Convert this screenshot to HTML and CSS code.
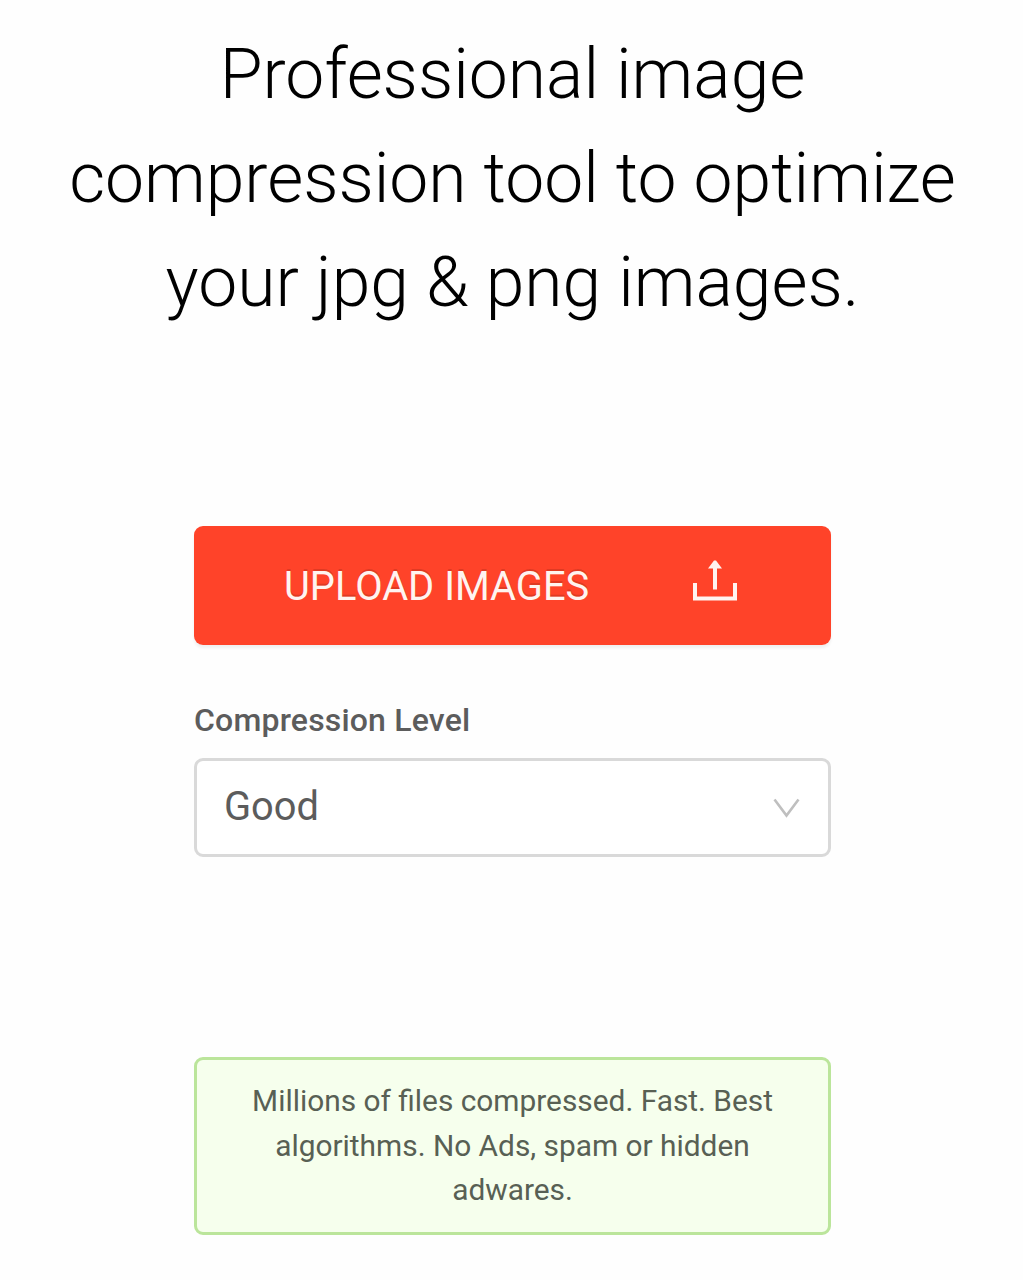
FILE: index.html
```html
<!DOCTYPE html>
<html lang="en">
<head>
<meta charset="utf-8">
<title>Image compression</title>
<link rel="stylesheet" href="styles.css">
</head>
<body>
<main class="page">
  <h1 class="headline"><span class="line">Professional image</span><span class="line">compression tool to optimize</span><span class="line">your jpg &amp; png images.</span></h1>
  <section class="panel">
    <button class="upload" type="button">
      <span class="upload-text">UPLOAD IMAGES</span>
      <svg class="upload-icon" viewBox="0 0 46 44" width="46" height="44" fill="none"><path d="M3 24V39.500H43V24" stroke="#fff4f0" stroke-width="4"/><path d="M23 30.500V8" stroke="#fff4f0" stroke-width="4"/><path d="M16 9.500L22 1.500H24L30 9.500Z" fill="#fff4f0"/></svg>
    </button>
    <div class="label">Compression Level</div>
    <div class="select">
      <span class="value">Good</span>
      <svg class="chevron" viewBox="0 0 28 22" width="28" height="22" fill="none"><path d="M2.500 2.500L14.500 18.500L26.500 2.500" stroke="#bfbfbf" stroke-width="2.600"/></svg>
    </div>
    <p class="notice"><span class="line">Millions of files compressed. Fast. Best</span><span class="line">algorithms. No Ads, spam or hidden</span><span class="line">adwares.</span></p>
  </section>
</main>
</body>
</html>
```
FILE: styles.css
```css
* { box-sizing: border-box; }
body { margin: 0; background: #fefefe; font-family: Roboto, sans-serif; }
.page { display: flex; flex-direction: column; align-items: center; width: 1023px; height: 1280px; padding-top: 22px; overflow: hidden; }
.headline { margin: 0 0 0 2px; font-size: 69.600px; font-weight: 300; line-height: 104px; color: #000; text-align: center; }
.line { display: block; white-space: nowrap; }
.panel { width: 637px; margin: 192px 0 0 2px; }
.upload { display: flex; align-items: flex-start; width: 100%; height: 119px; padding: 0 0 0 90px; border: 0; border-radius: 9px; background: #ff4329; color: #fff4f0; font: 400 39.850px/119px Roboto, sans-serif; box-shadow: 0 3px 3px rgba(0,0,0,.06); text-shadow: 0 -2px 0 rgba(0,0,0,.12); }
.upload-text { width: 408px; padding-top: 1px; text-align: left; white-space: nowrap; }
.upload-icon { margin-top: 33px; }
.label { margin-top: 56px; font-size: 32px; font-weight: 500; line-height: 38px; letter-spacing: .180px; color: #5c5c5c; white-space: nowrap; }
.select { display: flex; align-items: center; justify-content: space-between; height: 99px; margin-top: 19px; padding: 0 28px 0 27px; border: 3px solid #d9d9d9; border-radius: 9px; color: #5c5c5c; font-size: 39.800px; background: #fff; }
.value { padding-bottom: 2px; }
.notice { height: 178px; margin: 200px 0 0; padding: 19px 0; border: 3px solid #bbe59b; border-radius: 9px; background: #f6ffed; color: #586054; font-size: 29.850px; line-height: 44.700px; text-align: center; }
```
